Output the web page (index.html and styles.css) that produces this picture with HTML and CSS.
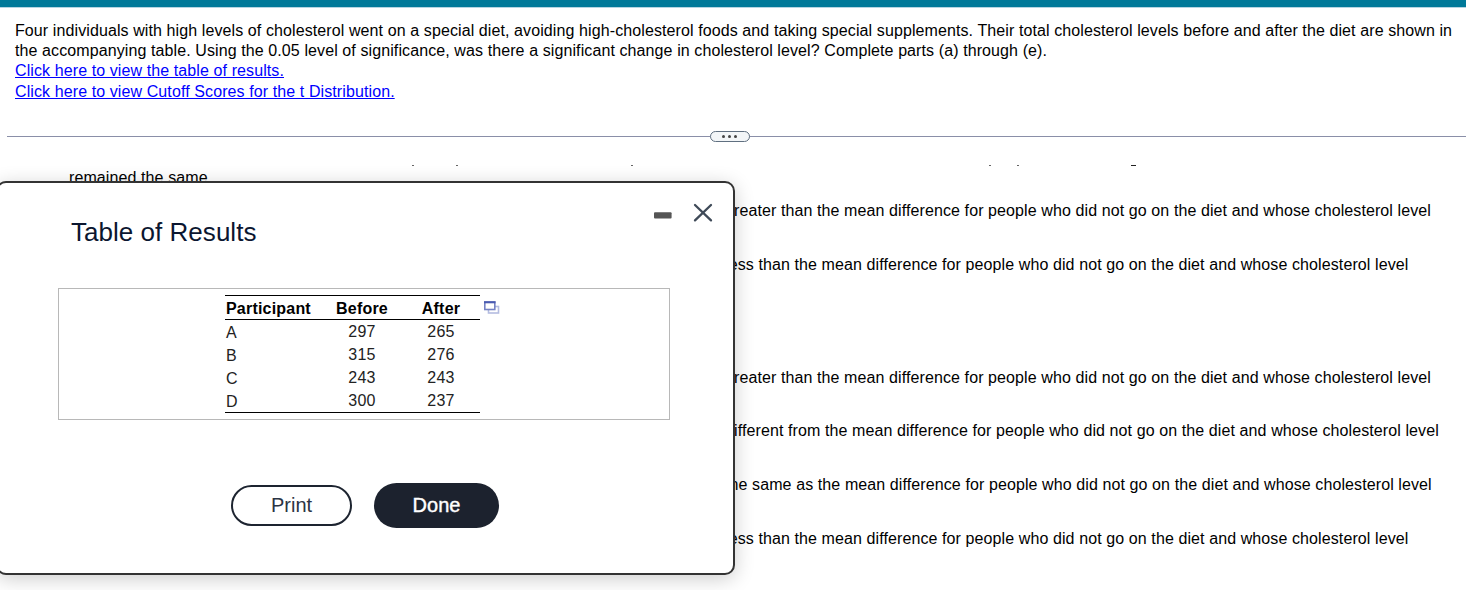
FILE: index.html
```
<!DOCTYPE html>
<html lang="en">
<head>
  <meta charset="UTF-8">
  <meta name="viewport" content="width=device-width, initial-scale=1">
  <title>Table of Results</title>
  <link rel="stylesheet" href="styles.css">
</head>
<body>
  <div class="top-bar"></div>

  <!-- Question -->
  <section class="question">
    <p>Four individuals with high levels of cholesterol went on a special diet, avoiding high-cholesterol foods and taking special supplements. Their total cholesterol levels before and after the diet are shown in<br>the accompanying table. Using the 0.05 level of significance, was there a significant change in cholesterol level? Complete parts (a) through (e).</p>
    <a href="#">Click here to view the table of results.</a>
    <a href="#">Click here to view Cutoff Scores for the t Distribution.</a>
  </section>

  <div class="divider">
    <button class="handle" aria-label="Resize"><i></i><i></i><i></i></button>
  </div>

  <!-- Answer choices, scrolled -->
  <section class="answers">
    <svg class="clipped-line" width="1466" height="2" viewBox="0 0 1466 2">
      <path d="M412.3 .5h1.4M456.3 .5h1.4M631.3 .5h1.4M989.3 .5h1.4M1017.3 .5h1.4M1131 .5h5" stroke="#222"/>
    </svg>
    <p class="remained">remained the same</p>
    <p class="choice">greater than the mean difference for people who did not go on the diet and whose cholesterol level</p>
    <p class="choice">less than the mean difference for people who did not go on the diet and whose cholesterol level</p>
    <p class="choice next-group">greater than the mean difference for people who did not go on the diet and whose cholesterol level</p>
    <p class="choice">different from the mean difference for people who did not go on the diet and whose cholesterol level</p>
    <p class="choice">the same as the mean difference for people who did not go on the diet and whose cholesterol level</p>
    <p class="choice">less than the mean difference for people who did not go on the diet and whose cholesterol level</p>
  </section>

  <!-- Dialog -->
  <div class="dialog" role="dialog">
    <div class="window-buttons">
      <svg width="18" height="20" viewBox="0 0 18 20"><rect y="9.3" width="17.6" height="6.2" rx="1" fill="#555"/></svg>
      <svg width="20" height="20" viewBox="0 0 20 20"><path d="M2 2l16 15.4M18 2L2 17.4" stroke="#3f4a58" stroke-width="2.3" stroke-linecap="round"/></svg>
    </div>
    <h2>Table of Results</h2>
    <div class="table-box">
      <table>
        <thead>
          <tr><th>Participant</th><th>Before</th><th>After</th></tr>
        </thead>
        <tbody>
          <tr><td>A</td><td>297</td><td>265</td></tr>
          <tr><td>B</td><td>315</td><td>276</td></tr>
          <tr><td>C</td><td>243</td><td>243</td></tr>
          <tr><td>D</td><td>300</td><td>237</td></tr>
        </tbody>
      </table>
      <svg class="popout" width="16" height="14" viewBox="0 0 16 14">
        <rect x="4.5" y="5.5" width="10" height="6.5" fill="#fff" stroke="#b4bce0" stroke-width="1.6"/>
        <rect x=".8" y="1" width="10" height="7.5" fill="#fff" stroke="#7582c4" stroke-width="1.6"/>
        <path d="M0 1.3h11.5" stroke="#4a5bb0" stroke-width="2"/>
      </svg>
    </div>
    <div class="actions">
      <button class="print">Print</button>
      <button class="done">Done</button>
    </div>
  </div>
</body>
</html>
```
FILE: styles.css
```
* {
  box-sizing: border-box;
  margin: 0;
  padding: 0;
}

body {
  height: 590px;
  overflow: hidden;
  background-color: #fff;
  color: #000;
  font-family: "Liberation Sans", Arial, sans-serif;
  font-size: 16px;
  line-height: 20px;
  letter-spacing: 0.1px;
}

.top-bar {
  height: 8px;
  background-color: #007999;
  border-bottom: 1px solid #b5d5e2;
}

/* Question */
.question {
  height: 122px;
  padding: 13px 0 0 15px;
  white-space: nowrap;
}

.question a {
  display: block;
  width: max-content;
  margin-bottom: 1px;
  color: #0000ff;
}

.divider {
  display: flex;
  align-items: center;
  height: 12px;
  margin-left: 7px;
  background: linear-gradient(#8a8fa8, #8a8fa8) 0 6px / 100% 1px no-repeat;
}

.handle {
  display: flex;
  align-items: center;
  justify-content: center;
  gap: 3px;
  width: 40px;
  height: 11px;
  margin-left: 703px;
  padding-right: 1px;
  border: 1px solid #5f6f80;
  border-radius: 6px;
  background-color: #f3f6f8;
}

.handle i {
  width: 3px;
  height: 3px;
  border-radius: 50%;
  background-color: #444;
}

/* Answers */
.answers {
  padding-top: 23px;
  white-space: nowrap;
}

.clipped-line {
  display: block;
}

.remained {
  margin-top: 1px;
  padding-left: 69px;
}

.choice {
  margin: 13px 0 34px 725px;
}

.choice + .choice {
  margin-top: 0;
}

.choice + .next-group {
  margin-top: 93px;
  margin-bottom: 33px;
}

/* Dialog */
.dialog {
  position: absolute;
  top: 181px;
  left: -4px;
  width: 739px;
  height: 394px;
  border: 2px solid #333;
  border-radius: 10px;
  background-color: #fff;
  box-shadow: 0 4px 20px rgba(0, 0, 0, 0.2);
}

.window-buttons {
  display: flex;
  justify-content: flex-end;
  gap: 21px;
  height: 32px;
  padding: 20px 20px 0 0;
}

.dialog h2 {
  margin-left: 73px;
  color: #0b1630;
  font-size: 26px;
  font-weight: normal;
  line-height: 34px;
  letter-spacing: 0.03px;
}

.table-box {
  display: flex;
  width: 612px;
  height: 132px;
  margin: 39px 0 0 60px;
  padding: 6px 0 0 166px;
  border: 1px solid #b8b8b8;
}

table {
  width: 255px;
  height: 118px;
  border-collapse: collapse;
  border-top: 1px solid #000;
  border-bottom: 1px solid #000;
  table-layout: fixed;
}

th, td {
  height: 23px;
  text-align: center;
  line-height: 23px;
}

th {
  padding-top: 2px;
  line-height: 21px;
  letter-spacing: 0.2px;
}

th:first-child {
  width: 97px;
}

th:nth-child(2) {
  width: 80px;
}

th:first-child, td:first-child {
  padding-left: 1px;
  text-align: left;
}

td:first-child {
  padding-top: 2px;
  line-height: 21px;
}

thead {
  border-bottom: 1px solid #000;
}

td {
  color: #222;
  letter-spacing: 0.25px;
}

.popout {
  margin: 6px 0 0 4px;
}

.actions {
  display: flex;
  align-items: center;
  gap: 22px;
  margin: 63px 0 0 233px;
}

.actions button {
  font-family: inherit;
  font-size: 20px;
}

.print {
  width: 121px;
  height: 41px;
  border: 2px solid #1d2430;
  border-radius: 21px;
  background-color: #fff;
  color: #2b3444;
}

.done {
  width: 125px;
  height: 45px;
  border: none;
  border-radius: 23px;
  background-color: #1c222e;
  color: #fff;
  -webkit-text-stroke: 0.4px #fff;
}
```
